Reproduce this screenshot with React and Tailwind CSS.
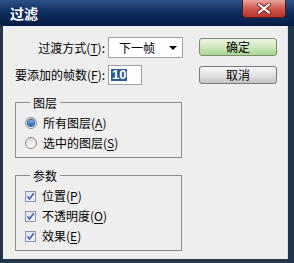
import React from 'react'

const cjk = { fontFamily: '"Noto Sans CJK SC", "Noto Sans", sans-serif' }

function Key({ k }) {
  return (
    <>
      (<span className="underline underline-offset-2">{k}</span>)
    </>
  )
}

function Radio({ checked }) {
  return (
    <span className="flex h-[12px] w-[12px] items-center justify-center rounded-full border border-[#8a8a8a] bg-gradient-to-b from-[#d8d8d8] to-[#fbfbfb]">
      {checked && (
        <span className="h-[6px] w-[6px] rounded-full bg-gradient-to-b from-[#6fb2f0] to-[#1f5fb0] ring-1 ring-[#2a5a9a]" />
      )}
    </span>
  )
}

function Check() {
  return (
    <span className="flex h-[11px] w-[11px] items-center justify-center border border-[#8c96a6] bg-gradient-to-br from-[#dfe4ee] to-[#f6f7fa]">
      <svg width="9" height="9" viewBox="0 0 9 9">
        <path d="M1.5 4.5 L3.5 7 L7.8 1.2" fill="none" stroke="#3a5fb0" strokeWidth="1.6" />
      </svg>
    </span>
  )
}

export default function App() {
  return (
    <div className="flex h-[263px] w-[294px] flex-col bg-[#24364a] text-[12px] text-black" style={cjk}>
      <div className="flex h-[26px] shrink-0 items-start justify-between bg-gradient-to-b from-[#2b5088] via-[#0e2c5c] to-[#041d45] pl-[10px] pr-[8px]">
        <span className="pt-[5px] text-[14px] font-bold leading-[16px] text-white">过滤</span>
        <div className="flex h-[18px] w-[44px] items-center justify-center rounded-b-[4px] border border-t-0 border-[#5a1a1a] bg-gradient-to-b from-[#e9a59e] via-[#cf5a4f] to-[#b8352c]">
          <svg width="14" height="11" viewBox="0 0 14 11">
            <path d="M2 1.5 L12 9.5 M12 1.5 L2 9.5" stroke="#6a2020" strokeWidth="4" strokeLinecap="round" />
            <path d="M2 1.5 L12 9.5 M12 1.5 L2 9.5" stroke="#ffffff" strokeWidth="2.2" strokeLinecap="round" />
          </svg>
        </div>
      </div>

      <div className="ml-[3px] mr-[6px] mb-[4px] flex flex-1 gap-[17px] border-r border-[#d8dce2] bg-[#eeeeee] pl-[12px] pt-[11px]">
        <div className="flex w-[167px] flex-col">
          <div className="grid grid-cols-[90px_1fr] items-center gap-x-[3px] gap-y-[7px]">
            <span className="whitespace-nowrap text-right">
              过渡方式<Key k="T" />:
            </span>
            <div className="flex h-[21px] w-[75px] items-center justify-between border border-[#a2a2a2] bg-white pl-[10px] pr-[5px]">
              <span>下一帧</span>
              <span className="h-0 w-0 border-x-[4px] border-t-[4px] border-x-transparent border-t-black" />
            </div>
            <span className="whitespace-nowrap text-right">
              要添加的帧数<Key k="F" />:
            </span>
            <div className="flex h-[20px] w-[34px] items-center border border-[#a2a2a2] bg-white pl-[2px]">
              <span
                className="bg-[#2f5d92] px-[1px] text-[13px] font-bold leading-[12px] text-white"
                style={{ fontFamily: '"Liberation Sans", sans-serif' }}
              >
                10
              </span>
            </div>
          </div>

          <fieldset className="mt-[11px] h-[62px] border border-[#8e8e8e] pl-[9px] pt-[4px]">
            <legend className="ml-[5px] px-[3px] leading-[13px]">图层</legend>
            <label className="flex h-[20px] items-center gap-[6px]">
              <Radio checked />
              <span>
                所有图层<Key k="A" />
              </span>
            </label>
            <label className="flex h-[20px] items-center gap-[6px]">
              <Radio />
              <span>
                选中的图层<Key k="S" />
              </span>
            </label>
          </fieldset>

          <fieldset className="mt-[11px] h-[82px] border border-[#8e8e8e] pl-[9px] pt-[4px]">
            <legend className="ml-[5px] px-[3px] leading-[13px]">参数</legend>
            <label className="flex h-[20px] items-center gap-[6px]">
              <Check />
              <span>
                位置<Key k="P" />
              </span>
            </label>
            <label className="flex h-[20px] items-center gap-[6px]">
              <Check />
              <span>
                不透明度<Key k="O" />
              </span>
            </label>
            <label className="flex h-[20px] items-center gap-[6px]">
              <Check />
              <span>
                效果<Key k="E" />
              </span>
            </label>
          </fieldset>
        </div>

        <div className="flex w-[78px] flex-col gap-[10px] pt-[1px]">
          <button
            type="button"
            className="h-[18px] rounded-[3px] border border-[#7d8a74] bg-gradient-to-b from-[#eef7e6] via-[#cfe8bd] to-[#a9d48e] text-[12px] leading-[16px]"
          >
            确定
          </button>
          <button
            type="button"
            className="h-[18px] rounded-[3px] border border-[#7a7a7a] bg-gradient-to-b from-[#f7f7f7] via-[#e2e2e2] to-[#c4c4c4] text-[12px] leading-[16px]"
          >
            取消
          </button>
        </div>
      </div>
    </div>
  )
}
